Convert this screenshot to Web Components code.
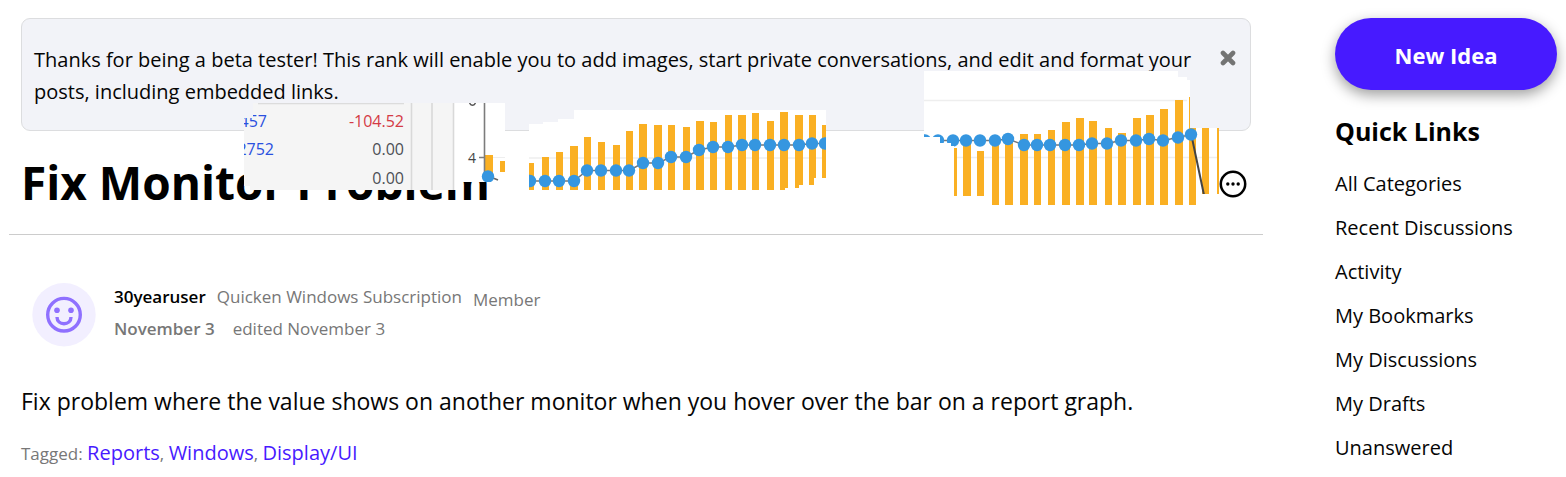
<!DOCTYPE html>
<html lang="en">
<head>
<meta charset="utf-8">
<title>Fix Monitor Problem</title>
<style>
body { margin: 0; background: #fff; color: #050505; font-family: "Open Sans", "Noto Sans", sans-serif; }
</style>
</head>
<body>
<community-page>
  <discussion-view slot="main">
    <notice-banner slot="notice">Thanks for being a beta tester! This rank will enable you to add images, start private conversations, and edit and format your posts, including embedded links.</notice-banner>
    <discussion-header slot="header">Fix Monitor Problem</discussion-header>
    <author-meta slot="meta" name="30yearuser" plan="Quicken Windows Subscription" rank="Member" date="November 3" edited="edited November 3"></author-meta>
    Fix problem where the value shows on another monitor when you hover over the bar on a report graph.
    <tag-list slot="tags" tags="Reports|Windows|Display/UI"></tag-list>
    <chart-fragments slot="overlay"></chart-fragments>
  </discussion-view>
  <pill-button slot="side">New Idea</pill-button>
  <quick-links slot="side" heading="Quick Links" links="All Categories|Recent Discussions|Activity|My Bookmarks|My Discussions|My Drafts|Unanswered"></quick-links>
</community-page>

<script>
const define = (name, html, setup) => customElements.define(name, class extends HTMLElement {
  constructor() {
    super();
    this.attachShadow({ mode: 'open' }).innerHTML = html;
  }
  connectedCallback() { if (setup) setup(this, this.shadowRoot); }
});

define('community-page', `
<style>
:host { display: grid; grid-template-columns: minmax(0, 1fr) 222px; gap: 72px; padding: 18px 9px 0; }
main, aside { min-width: 0; }
</style>
<main><slot name="main"></slot></main>
<aside><slot name="side"></slot></aside>`);

define('discussion-view', `
<style>
:host { display: block; position: relative; }
.notice, .body { padding: 0 12px; }
p { margin: 38px 0 20px; font-size: 23px; line-height: 32px; }
</style>
<div class="notice"><slot name="notice"></slot></div>
<slot name="header"></slot>
<div class="body">
  <slot name="meta"></slot>
  <p><slot></slot></p>
  <slot name="tags"></slot>
</div>
<slot name="overlay"></slot>`);

define('notice-banner', `
<style>
:host { display: flex; gap: 16px; padding: 24px 12px 22px; background: #f2f3f8; border: 1px solid #dcdddf; border-radius: 9px; font-size: 20px; line-height: 32px; }
div { flex: 1; padding-top: 1px; }
button { width: 20px; height: 30px; padding: 0; border: 0; background: none; display: grid; place-items: center; }
svg { width: 16px; height: 16px; }
</style>
<div><slot></slot></div>
<button type="button" aria-label="Dismiss"><svg viewBox="0 0 16 16"><path d="M3 3l10 10M13 3L3 13" stroke="#747474" stroke-width="4.6" stroke-linecap="round"/></svg></button>`);

define('discussion-header', `
<style>
:host { display: flex; align-items: flex-end; justify-content: space-between; margin-top: 23px; padding: 0 12px 24px; border-bottom: 1px solid #ccc; }
h1 { margin: 0; font-size: 46px; line-height: 56px; font-weight: 700; color: #000; }
button { width: 36px; height: 52px; padding: 0; border: 0; background: none; display: grid; place-items: center; }
svg { width: 28px; height: 28px; }
</style>
<h1><slot></slot></h1>
<button type="button" aria-label="Options"><svg viewBox="0 0 28 28"><circle cx="14" cy="14" r="12.2" fill="#fff" stroke="#000" stroke-width="2.5"/><circle cx="8.8" cy="14" r="1.7"/><circle cx="14" cy="14" r="1.7"/><circle cx="19.2" cy="14" r="1.7"/></svg></button>`);

define('author-meta', `
<style>
:host { display: flex; gap: 18px; margin-top: 46px; padding-left: 11px; font-size: 17px; line-height: 32px; color: #777; }
svg { width: 64px; height: 64px; margin-top: 2px; }
.row { display: flex; gap: 11px; }
.dates { gap: 18px; }
a { color: #000; font-weight: 600; text-decoration: none; }
.date { color: #777; }
.rank { line-height: 38px; height: 32px; }
</style>
<svg viewBox="0 0 64 64" aria-hidden="true">
  <circle cx="32" cy="31.7" r="31.7" fill="#f2efff"/>
  <g fill="none" stroke="#8f70ff" stroke-width="3.4"><circle cx="32" cy="31.7" r="16.3"/><path d="M25 34c0 9 14 9 14 0"/></g>
  <g fill="#8f70ff"><circle cx="25" cy="27.3" r="2.8"/><circle cx="39" cy="27.3" r="2.8"/></g>
</svg>
<div>
  <div class="row"><a href="#" data-f="name"></a><span data-f="plan"></span><span class="rank" data-f="rank"></span></div>
  <div class="row dates"><a class="date" href="#" data-f="date"></a><span data-f="edited"></span></div>
</div>`, (host, root) => {
  root.querySelectorAll('[data-f]').forEach(el => { el.textContent = host.getAttribute(el.dataset.f); });
});

define('tag-list', `
<style>
:host { display: block; font-size: 17px; line-height: 32px; color: #777; }
a { font-size: 20px; color: #471aff; text-decoration: none; }
</style>
<div>Tagged: </div>`, (host, root) => {
  const box = root.querySelector('div');
  host.getAttribute('tags').split('|').forEach((tag, i) => {
    if (i) box.append(', ');
    const a = document.createElement('a');
    a.href = '#';
    a.textContent = tag;
    box.append(a);
  });
});

define('pill-button', `
<style>
:host { display: block; }
button { width: 100%; height: 72px; padding: 2px 0 0; border: 0; border-radius: 36px; background: #471aff; color: #fff; font: 700 22px/32px "Open Sans", "Noto Sans", sans-serif; box-shadow: 0 5px 14px rgba(0, 0, 0, .38); }
</style>
<button type="button"><slot></slot></button>`);

define('quick-links', `
<style>
:host { display: block; margin-top: 24px; }
h2 { margin: 0 0 14px; font-size: 25px; line-height: 34px; font-weight: 700; color: #000; }
ul { list-style: none; margin: 0; padding: 0; }
li { font-size: 20px; line-height: 44px; }
a { color: #050505; text-decoration: none; }
</style>
<nav><h2></h2><ul></ul></nav>`, (host, root) => {
  root.querySelector('h2').textContent = host.getAttribute('heading');
  host.getAttribute('links').split('|').forEach(text => {
    const li = document.createElement('li');
    const a = document.createElement('a');
    a.href = '#';
    a.textContent = text;
    li.append(a);
    root.querySelector('ul').append(li);
  });
});

/* Torn pieces of a report graph that float over the page. */
const bars = list => list.map(([x, w, top, bottom]) => `<rect x="${x}" y="${top}" width="${w}" height="${bottom - top}"/>`).join('');
const dots = list => list.map(([x, y]) => `<circle cx="${x}" cy="${y}" r="6.2"/>`).join('');
const line = list => `<polyline points="${list.join(' ')}" fill="none" stroke="#777" stroke-width="1.6"/>`;
const bars2 = [[529,5,163],[542,7,157],[556,7,152],[570,8,146],[584,7,137],[598,7,142],[613,7,145],[626,7,131],[639,8,124],[654,8,125],[668,7,125],[683,7,127],[696,8,121],[710,7,122],[725,7,115],[738,8,115],[752,7,113],[767,7,121],[780,8,112],[795,8,115],[809,7,115],[822,6,125]].map(b => [...b, 190]);
const dots2 = [[530,181],[545,181],[559,181],[574,181],[587,170.5],[601,170.5],[616,170.5],[629,170.5],[643,163],[658,163],[671,157],[686,157],[699,150],[713,147],[728,147],[742,145],[755,145],[770,145],[784,145],[799,145],[812,143.5],[825,143.5]];
const bars3 = [[954,3,148,196],[963,8,140,196],[977,7,151,196],[992,7,140,205],[1005,8,140,205],[1020,8,134,205],[1034,7,134,205],[1048,7,130,205],[1062,8,122,205],[1076,8,118,205],[1089,8,121,205],[1105,7,128,205],[1118,8,133,205],[1133,8,118,205],[1146,8,115,205],[1160,8,109,205],[1175,8,100,205],[1189,7,97,205],[1202,7,128,194],[1217,2,128,194]];
const dots3 = [[925,140.5],[938,140.5],[953,140.5],[966,140.5],[980,140.5],[995,140.5],[1008,139],[1024,145],[1037,145],[1050,145],[1065,145],[1079,145],[1092,143.5],[1107,143.5],[1121,140.5],[1136,140.5],[1149,139],[1163,140.5],[1178,137.5],[1191,134.5]];

define('chart-fragments', `
<style>
:host { display: block; position: absolute; left: 231px; top: 52px; pointer-events: none; }
svg { display: block; width: 980px; height: 136px; font-family: "Open Sans", "Noto Sans", sans-serif; font-size: 16px; }
</style>
<svg viewBox="240 70 980 136" aria-hidden="true">
  <defs>
    <clipPath id="a"><path d="M253 103H505V172H502V182H457V190H250V186H244V118H253Z"/></clipPath>
    <clipPath id="b"><path d="M529 190V124H543V122H558V119H574V110H826V178H814V185H799V188H785V190Z"/></clipPath>
    <clipPath id="c"><path d="M924 71H1178V77H1187V80H1190V128H1219V194H1197V205H992V196H954V146H951V143H940V137H924Z"/></clipPath>
  </defs>
  <g clip-path="url(#a)">
    <rect x="244" y="103" width="210" height="87" fill="#f5f5f5"/>
    <rect x="454" y="103" width="51" height="87" fill="#fff"/>
    <path d="M258 103.5H404" stroke="#dcdcdc" stroke-width="1.5"/>
    <path d="M411.5 103V190M432 103V190M453.5 103V190" stroke="#d9d9d9" stroke-width="1.6"/>
    <text x="267" y="127" text-anchor="end" fill="#2a50e0">457</text>
    <text x="274" y="155" text-anchor="end" fill="#2a50e0">2752</text>
    <g text-anchor="end" fill="#4c4f55"><text x="404" y="127" fill="#d43a45">-104.52</text><text x="404" y="155">0.00</text><text x="404" y="184">0.00</text></g>
    <path d="M485 157.5H505" stroke="#eee"/>
    <g fill="#fab023"><rect x="485" y="155" width="8" height="18"/><rect x="500" y="161" width="5" height="11"/></g>
    <path d="M484.5 103V176M479 157.5H484" stroke="#7c7c7c" stroke-width="1.6"/>
    <path d="M493 178L498 180" stroke="#666" stroke-width="1.8"/>
    <circle cx="488" cy="176.5" r="6.2" fill="#3596e0"/>
    <path d="M469.5 103q3 4.6 6 0" fill="none" stroke="#555" stroke-width="1.4"/>
    <text x="468" y="163" font-size="14" fill="#444">4</text>
  </g>
  <g clip-path="url(#b)">
    <rect x="529" y="110" width="297" height="80" fill="#fff"/>
    <path d="M529 158H826" stroke="#eee" stroke-width="1.5"/>
    <g fill="#fab023">${bars(bars2)}</g>
    ${line(dots2)}
    <g fill="#3596e0">${dots(dots2)}</g>
  </g>
  <g clip-path="url(#c)">
    <rect x="924" y="71" width="295" height="134" fill="#fff"/>
    <path d="M924 100.5H1187M957 157.5H1219" stroke="#eee" stroke-width="1.5"/>
    <g fill="#fab023">${bars(bars3)}</g>
    ${line(dots3)}
    <path d="M1192 138L1204 195" stroke="#444" stroke-width="2"/>
    <g fill="#3596e0">${dots(dots3)}</g>
  </g>
</svg>`);
</script>
</body>
</html>
